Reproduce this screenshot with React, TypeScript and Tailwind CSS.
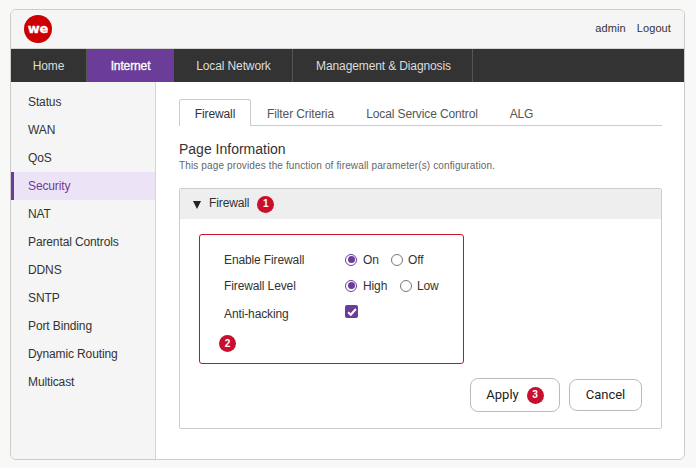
const sideItems = ["Status", "WAN", "QoS", "Security", "NAT", "Parental Controls", "DDNS", "SNTP", "Port Binding", "Dynamic Routing", "Multicast"]

const navItems = [
  { label: "Home", w: "w-[76px]" },
  { label: "Internet", w: "w-[87px] pl-[1px]", active: true },
  { label: "Local Network", w: "w-[119px] pl-[1px]" },
  { label: "Management & Diagnosis", w: "w-[180px] pl-[2px]" },
]

const tabs = [
  { label: "Firewall", w: "w-[72px]", active: true },
  { label: "Filter Criteria", w: "w-[99px]" },
  { label: "Local Service Control", w: "w-[144px]" },
  { label: "ALG", w: "w-[55px]" },
]

function Badge({ n }: { n: number }) {
  return (
    <span className="flex h-[17px] w-[17px] items-center justify-center rounded-full bg-[#c8102e] text-[10px] font-bold leading-none tracking-normal text-white">
      {n}
    </span>
  )
}

function Radio({ checked }: { checked?: boolean }) {
  return (
    <span className={`flex h-[12px] w-[12px] items-center justify-center rounded-full border bg-white ${checked ? "border-[#6b3d99]" : "border-[#777]"}`}>
      {checked && <span className="h-[7px] w-[7px] rounded-full bg-[#6b3d99]" />}
    </span>
  )
}

export default function App() {
  return (
    <div className="h-[468px] w-[696px] overflow-hidden bg-[#f8f8f6] pl-[10px] pt-[9px] font-['Liberation_Sans',Arial,sans-serif] text-[12px] tracking-[-0.12px] text-[#333]">
      <div className="flex h-[451px] w-[675px] flex-col overflow-hidden rounded-[6px] border border-[#cccccc] bg-white">
        {/* Header */}
        <div className="flex h-[39px] shrink-0 items-center justify-between border-b border-[#d5d5d5] bg-[#f5f5f5] px-[13px]">
          <svg width="28" height="28" viewBox="0 0 28 28">
            <circle cx="14" cy="14" r="14" fill="#cc0000" />
            <text x="14" y="18" textAnchor="middle" fontSize="13" fontWeight="900" fill="#fff" stroke="#fff" strokeWidth="0.3" fontFamily="'DejaVu Sans', sans-serif">we</text>
          </svg>
          <div className="mt-[-1px] flex gap-[11px] text-[11px] tracking-[0.1px]">
            <span>admin</span>
            <span>Logout</span>
          </div>
        </div>

        {/* Main nav */}
        <div className="flex h-[33px] shrink-0 bg-[#333333]">
          {navItems.map((n) => (
            <div
              key={n.label}
              className={`flex items-center justify-center border-r border-[#555] ${n.w} ${n.active ? "bg-[#6b3d99] text-white [-webkit-text-stroke:0.3px_white]" : "text-[#dddddd]"}`}
            >
              {n.label}
            </div>
          ))}
        </div>

        <div className="flex min-h-0 flex-1">
          {/* Sidebar */}
          <div className="w-[145px] shrink-0 border-r border-[#d5d5d5] bg-[#f5f5f5] pt-[6px]">
            {sideItems.map((s) => (
              <div
                key={s}
                className={
                  s === "Security"
                    ? "flex h-[28px] items-center border-l-[3px] border-[#6b3d99] bg-[#ede3f6] pl-[14px] text-[#6b3d99]"
                    : "flex h-[28px] items-center pl-[17px]"
                }
              >
                {s}
              </div>
            ))}
          </div>

          {/* Content */}
          <div className="min-w-0 flex-1 pl-[23px] pr-[22px] pt-[17px]">
            <div className="flex h-[27px] border-b border-[#cccccc]">
              {tabs.map((t) => (
                <div
                  key={t.label}
                  className={`flex h-[27px] items-center justify-center pt-[2px] ${t.w} ${t.active ? "rounded-t-[3px] border border-b-0 border-[#cccccc] bg-white" : "text-[#555]"}`}
                >
                  {t.label}
                </div>
              ))}
            </div>

            <div className="mt-[14px] text-[14px] leading-[18px] tracking-normal">Page Information</div>
            <div className="mt-[1px] text-[10px] leading-[14px] tracking-[0.13px] text-[#666]">
              This page provides the function of firewall parameter(s) configuration.
            </div>

            {/* Firewall panel */}
            <div className="mt-[15px] h-[241px] rounded-[2px] border border-[#cccccc]">
              <div className="flex h-[30px] items-center bg-[#eeeeee] pb-[1px] pl-[13px]">
                <span className="mr-[8px] mt-[3px] h-0 w-0 border-x-[4.5px] border-t-[8px] border-x-transparent border-t-[#222]" />
                <span className="mt-[-2px]">Firewall</span>
                <span className="ml-[8px] mt-[1px]"><Badge n={1} /></span>
              </div>

              <div className="relative ml-[19px] mt-[15px] h-[130px] w-[265px] rounded-[3px] border border-[#c8102e] pl-[24px] pt-[15px]">
                <div className="flex h-[19px] items-center">
                  <span className="w-[121px]">Enable Firewall</span>
                  <Radio checked />
                  <span className="ml-[6px] w-[28px]">On</span>
                  <Radio />
                  <span className="ml-[5px]">Off</span>
                </div>
                <div className="mt-[7px] flex h-[19px] items-center">
                  <span className="w-[121px]">Firewall Level</span>
                  <Radio checked />
                  <span className="ml-[6px] w-[37px]">High</span>
                  <Radio />
                  <span className="ml-[5px]">Low</span>
                </div>
                <div className="mt-[9px] flex h-[19px] items-center">
                  <span className="w-[121px]">Anti-hacking</span>
                  <span className="mt-[-4px] flex h-[13px] w-[13px] items-center justify-center rounded-[2px] bg-[#6b3d99]">
                    <svg width="10" height="10" viewBox="0 0 9 9" fill="none">
                      <path d="M1 4.8 L3.4 7 L8 1.8" stroke="#fff" strokeWidth="1.8" />
                    </svg>
                  </span>
                </div>
                <div className="absolute bottom-[11px] left-[19px]"><Badge n={2} /></div>
              </div>

              <div className="mt-[14px] flex items-start justify-end gap-[9px] pr-[19px] font-['Roboto',sans-serif] text-[13px] tracking-normal">
                <button className="flex h-[34px] w-[90px] items-center justify-center gap-[8px] rounded-[8px] border border-[#bbbbbb] bg-white text-[#222]">
                  Apply <Badge n={3} />
                </button>
                <button className="mt-[1px] h-[32px] w-[73px] rounded-[8px] border border-[#bbbbbb] bg-white text-[#222]">
                  Cancel
                </button>
              </div>
            </div>
          </div>
        </div>
      </div>
    </div>
  )
}
